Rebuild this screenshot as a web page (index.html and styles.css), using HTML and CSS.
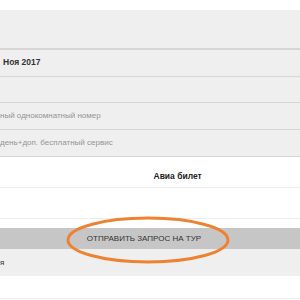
FILE: index.html
```html
<!DOCTYPE html>
<html lang="ru">
<head>
    <meta charset="UTF-8">
    <title>Заявка на тур</title>
    <link rel="stylesheet" href="styles.css">
</head>
<body>
    <div class="form">
        <div class="field tall"></div>
        <div class="field bold">Ноя 2017</div>
        <div class="field"></div>
        <div class="field muted">ный однокомнатный номер</div>
        <div class="field muted">день+доп. бесплатный сервис</div>

        <div class="row">
            <span class="cell"></span>
            <span class="cell label">Авиа билет</span>
        </div>
        <div class="row"></div>

        <div class="send-wrap">
            <button class="send">ОТПРАВИТЬ ЗАПРОС НА ТУР</button>
            <svg class="circle" width="170" height="52" viewBox="0 0 170 52">
                <ellipse cx="85" cy="26" rx="80" ry="22" fill="none" stroke="#ef8232" stroke-width="3"/>
            </svg>
        </div>
        <div class="field note">я</div>
        <div class="row last"></div>
    </div>
</body>
</html>
```

FILE: styles.css
```css
body {
    margin: 0;
    font-family: "Liberation Sans", Arial, sans-serif;
    background-color: #fff;
    overflow: hidden;
}
.form {
    padding-top: 10px;
}
.field {
    height: 25px;
    line-height: 25px;
    background-color: #efefef;
    border-bottom: 1px solid #d6d6d6;
    font-size: 8px;
    color: #333;
    padding-left: 1px;
}
.field.tall {
    height: 38px;
    border-bottom-width: 2px;
}
.field.bold {
    height: 26px;
    font-weight: bold;
    font-size: 8.5px;
    padding-left: 3px;
}
.field.muted {
    color: #949494;
    height: 26px;
    padding-left: 0;
}
.row {
    display: flex;
    height: 30px;
    border-bottom: 1px solid #ececec;
}
.row .cell {
    flex: 1;
    display: flex;
    align-items: flex-end;
    padding-bottom: 6px;
    font-size: 8.5px;
}
.cell.label {
    font-weight: bold;
    color: #222;
    padding-left: 7px;
}
.send-wrap {
    position: relative;
    margin-top: 9px;
}
.send {
    display: block;
    width: 100%;
    height: 21px;
    border: none;
    background-color: #c6c6c6;
    font-family: "Liberation Sans", Arial, sans-serif;
    font-size: 8px;
    color: #333;
    padding: 0 12px 0 0;
}
.circle {
    position: absolute;
    left: 63px;
    top: -14px;
}
.field.note {
    height: 27px;
    line-height: 27px;
    border-bottom: none;
    padding-left: 0;
}
.row.last {
    height: 22px;
}
```
